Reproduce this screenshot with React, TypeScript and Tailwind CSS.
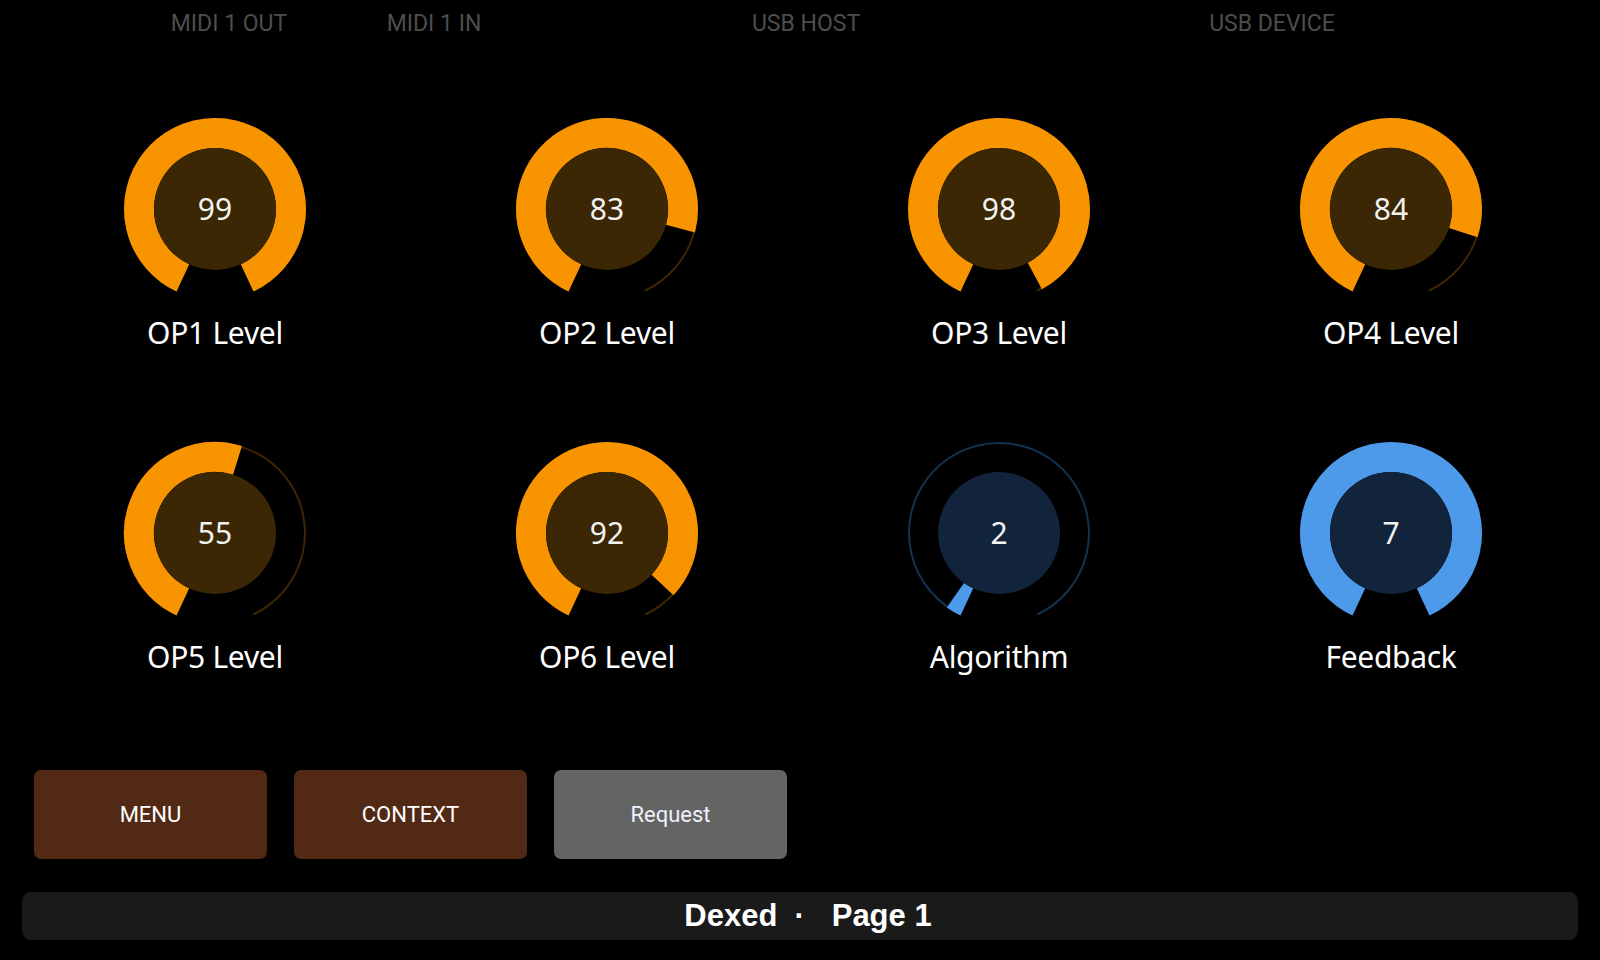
import React from "react"

type Tone = "orange" | "blue"

const knobs: { label: string; value: number; min: number; max: number; tone: Tone }[] = [
    { label: "OP1 Level", value: 99, min: 0, max: 99, tone: "orange" },
    { label: "OP2 Level", value: 83, min: 0, max: 99, tone: "orange" },
    { label: "OP3 Level", value: 98, min: 0, max: 99, tone: "orange" },
    { label: "OP4 Level", value: 84, min: 0, max: 99, tone: "orange" },
    { label: "OP5 Level", value: 55, min: 0, max: 99, tone: "orange" },
    { label: "OP6 Level", value: 92, min: 0, max: 99, tone: "orange" },
    { label: "Algorithm", value: 2, min: 1, max: 32, tone: "blue" },
    { label: "Feedback", value: 7, min: 0, max: 7, tone: "blue" },
]

const palette = {
    orange: { arc: "#f79400", track: "#3d2700", face: "#3b2703" },
    blue: { arc: "#4e9aea", track: "#14324f", face: "#11243b" },
}

const START = 115
const SWEEP = 310

function arcPath(cx: number, cy: number, r: number, a0: number, a1: number) {
    const rad = (a: number) => (a * Math.PI) / 180
    const x0 = cx + r * Math.cos(rad(a0))
    const y0 = cy + r * Math.sin(rad(a0))
    const x1 = cx + r * Math.cos(rad(a1))
    const y1 = cy + r * Math.sin(rad(a1))
    const large = a1 - a0 > 180 ? 1 : 0
    return `M ${x0} ${y0} A ${r} ${r} 0 ${large} 1 ${x1} ${y1}`
}

function Knob({ label, value, min, max, tone }: (typeof knobs)[number]) {
    const c = palette[tone]
    const frac = (value - min) / (max - min)
    const end = START + frac * SWEEP

    return (
        <div className="flex flex-col items-center">
            <div className="relative size-[184px]">
                <svg width="184" height="184" viewBox="0 0 184 184">
                    {/* track */}
                    <path d={arcPath(92, 92, 90, START, START + SWEEP)} fill="none" stroke={c.track} strokeWidth={2} />
                    {/* value */}
                    {frac > 0 && (
                        <path d={arcPath(92, 92, 76, START, end)} fill="none" stroke={c.arc} strokeWidth={30} />
                    )}
                    <circle cx="92" cy="92" r="61" fill={c.face} />
                </svg>
                <div className="absolute inset-0 flex items-center justify-center text-[30px] leading-none text-[#f2f2f2]">
                    {value}
                </div>
            </div>
            <div className="mt-[12px] h-[40px] text-[30px] leading-[40px] tracking-[-0.01em] text-white">{label}</div>
        </div>
    )
}

export default function App() {
    return (
        <div className="flex h-[960px] w-[1600px] flex-col overflow-hidden bg-black font-['Noto_Sans',sans-serif]">
            {/* Status header */}
            <div className="flex h-[48px] items-center font-['Roboto',sans-serif] text-[23px] text-[#4d4d4d]">
                <span className="ml-[129px] w-[200px] text-center">MIDI 1 OUT</span>
                <span className="ml-[5px] w-[200px] text-center">MIDI 1 IN</span>
                <span className="ml-[172px] w-[200px] text-center">USB HOST</span>
                <span className="ml-[266px] w-[200px] text-center">USB DEVICE</span>
            </div>

            {/* Knobs */}
            <div className="mt-[69px] grid grid-cols-[repeat(4,392px)] gap-y-[88px] pl-[19px]">
                {knobs.map((k) => (
                    <Knob key={k.label} {...k} />
                ))}
            </div>

            {/* Buttons */}
            <div className="mt-[93px] flex gap-[27px] pl-[34px] font-['Roboto',sans-serif] text-[22px] text-white">
                <button className="flex h-[89px] w-[233px] items-center justify-center rounded-[7px] bg-[#522914]">MENU</button>
                <button className="flex h-[89px] w-[233px] items-center justify-center rounded-[7px] bg-[#522914]">CONTEXT</button>
                <button className="flex h-[89px] w-[233px] items-center justify-center rounded-[7px] bg-[#636562] text-[#f0f0ff]">Request</button>
            </div>

            {/* Footer */}
            <div className="mx-[22px] mt-[33px] flex h-[48px] items-center justify-center rounded-[9px] bg-[#1a1a1a] pl-[16px] font-['Liberation_Sans',Arial,sans-serif] text-[31px] font-bold text-white">
                <span>Dexed</span>
                <span className="ml-[17px]">·</span>
                <span className="ml-[27px]">Page 1</span>
            </div>
        </div>
    )
}
